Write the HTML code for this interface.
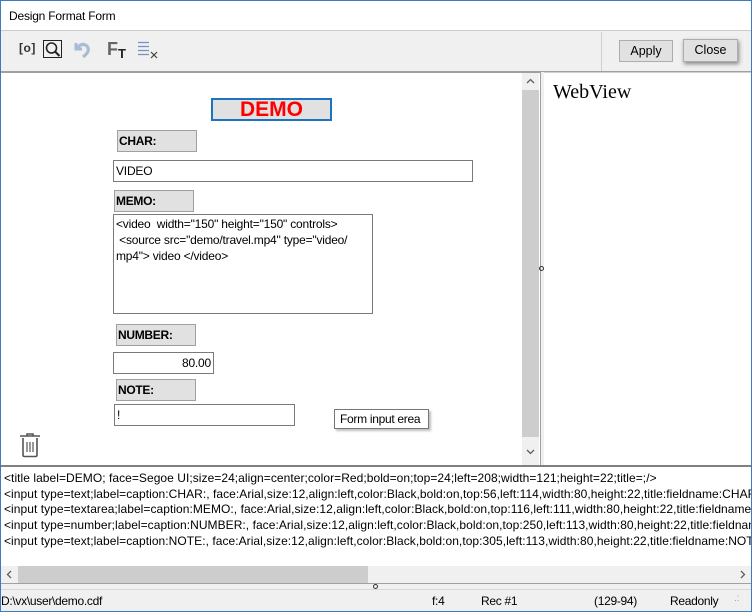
<!DOCTYPE html>
<html><head><meta charset="utf-8"><style>
*{margin:0;padding:0;box-sizing:border-box}
body{width:752px;height:612px;position:relative;overflow:hidden;background:#f0f0f0;font-family:"Liberation Sans",sans-serif;font-size:12px;color:#000}
.a{position:absolute}
.lbl{position:absolute;background:#e1e1e1;border:1px solid #a0a0a0;font-weight:bold;font-size:12px;padding:3px 0 0 1px;height:22px;letter-spacing:-0.3px}
.inp{position:absolute;background:#fff;border:1px solid #7a7a7a;font-size:12px;padding:3px 2px;letter-spacing:-0.2px}
.code{position:absolute;left:3px;font-size:12px;letter-spacing:0.05px;white-space:nowrap;color:#000}
</style></head><body>
<div class="a" style="left:0;top:0;width:752px;height:612px;border:1px solid #3b7bbf"></div>
<div class="a" style="left:1px;top:1px;width:750px;height:30px;background:#fff;border-bottom:1px solid #ccc"></div>
<div class="a" style="left:9px;top:9px;font-size:12px;letter-spacing:-0.2px">Design Format Form</div>
<div class="a" style="left:1px;top:32px;width:750px;height:40px;background:#f0f0f0;border-bottom:1px solid #a0a0a0"></div>
<div class="a" style="left:601px;top:32px;width:1px;height:39px;background:#d0d0d0"></div>
<div class="a" style="left:19px;top:41px;font-size:12px;font-weight:bold;color:#333;letter-spacing:0.5px">[o]</div>
<svg class="a" style="left:43px;top:40px" width="20" height="19"><rect x="0.5" y="0.5" width="18" height="17" fill="none" stroke="#222"/><circle cx="8.5" cy="8" r="5" fill="none" stroke="#222" stroke-width="1.6"/><line x1="12" y1="11.5" x2="16.5" y2="16" stroke="#222" stroke-width="2"/></svg>
<svg class="a" style="left:73px;top:40px" width="20" height="20"><path d="M3 3 L3 9 L9 9" fill="none" stroke="#a9bcd6" stroke-width="3"/><path d="M4 8 Q9 2 14 6 Q18 11 10 17" fill="none" stroke="#a9bcd6" stroke-width="3.2"/></svg>
<div class="a" style="left:107px;top:39px;font-size:18px;font-weight:bold;color:#666">F</div>
<div class="a" style="left:118px;top:46px;font-size:13px;font-weight:bold;color:#222">T</div>
<svg class="a" style="left:137px;top:41px" width="22" height="19"><g stroke="#7d8fc4" stroke-width="1.3"><line x1="1" y1="1.5" x2="12" y2="1.5"/><line x1="1" y1="5.5" x2="12" y2="5.5"/><line x1="1" y1="9.5" x2="12" y2="9.5"/><line x1="1" y1="13.5" x2="12" y2="13.5"/></g><g stroke="#444" stroke-width="1.2"><line x1="14" y1="11" x2="20" y2="17"/><line x1="20" y1="11" x2="14" y2="17"/></g></svg>
<div class="a" style="left:619px;top:40px;width:54px;height:22px;background:#e1e1e1;border:1px solid #adadad;text-align:center;line-height:20px;font-size:12.5px">Apply</div>
<div class="a" style="left:683px;top:39px;width:55px;height:23px;background:#e1e1e1;border:1px solid #adadad;text-align:center;line-height:21px;font-size:12.5px;box-shadow:1px 2px 4px rgba(0,0,0,.45)">Close</div>
<div class="a" style="left:1px;top:72px;width:540px;height:393px;background:#fff;border-right:1px solid #a0a0a0;border-top:1px solid #a0a0a0"></div>
<div class="a" style="left:522px;top:73px;width:17px;height:392px;background:#f0f0f0"></div>
<div class="a" style="left:522px;top:90px;width:17px;height:347px;background:#cdcdcd"></div>
<svg class="a" style="left:526px;top:78px" width="9" height="6"><path d="M1 5 L4.5 1.5 L8 5" fill="none" stroke="#606060" stroke-width="1.3"/></svg>
<svg class="a" style="left:526px;top:449px" width="9" height="6"><path d="M1 1 L4.5 4.5 L8 1" fill="none" stroke="#606060" stroke-width="1.3"/></svg>
<div class="a" style="left:211px;top:98px;width:121px;height:23px;background:#e1e1e1;border:2px solid #1e73be;color:#f00;font-weight:bold;font-size:21px;text-align:center;line-height:19px">DEMO</div>
<div class="lbl" style="left:117px;top:130px;width:80px">CHAR:</div>
<div class="inp" style="left:113px;top:160px;width:360px;height:22px">VIDEO</div>
<div class="lbl" style="left:114px;top:190px;width:80px">MEMO:</div>
<div class="inp" style="left:113px;top:214px;width:260px;height:100px;line-height:16px;padding:1px 2px">&lt;video&nbsp; width="150" height="150" controls&gt;<br>&nbsp;&lt;source src="demo/travel.mp4" type="video/<br>mp4"&gt; video &lt;/video&gt;</div>
<div class="lbl" style="left:116px;top:324px;width:80px">NUMBER:</div>
<div class="inp" style="left:113px;top:352px;width:101px;height:22px;text-align:right">80.00</div>
<div class="lbl" style="left:116px;top:379px;width:80px">NOTE:</div>
<div class="inp" style="left:114px;top:404px;width:181px;height:22px">!</div>
<div class="a" style="left:334px;top:409px;width:95px;height:20px;background:#fff;border:1px solid #767676;font-size:12px;padding:2px 0 0 5px;letter-spacing:-0.3px;box-shadow:2px 2px 2px rgba(0,0,0,.25)">Form input erea</div>
<svg class="a" style="left:19px;top:433px" width="24" height="25"><path d="M1 3 H21 M8 3 V1 H14 V3" fill="none" stroke="#555" stroke-width="1.6"/><path d="M4 5 V22 Q4 23.5 5.5 23.5 H16.5 Q18 23.5 18 22 V5" fill="none" stroke="#555" stroke-width="1.6"/><g stroke="#555" stroke-width="1.2"><line x1="8" y1="9" x2="8" y2="19"/><line x1="11" y1="9" x2="11" y2="19"/><line x1="14" y1="9" x2="14" y2="19"/></g></svg>
<div class="a" style="left:539px;top:266px;width:5px;height:5px;border:1px solid #333;border-radius:50%"></div>
<div class="a" style="left:544px;top:72px;width:207px;height:393px;background:#fff;border-top:1px solid #d0d0d0"></div>
<div class="a" style="left:553px;top:81px;font-family:'Liberation Serif',serif;font-size:20px">WebView</div>
<div class="a" style="left:1px;top:465px;width:750px;height:119px;background:#fff;border-top:2px solid #808080;border-bottom:1px solid #a0a0a0;overflow:hidden">
<div class="code" style="top:4px">&lt;title label=DEMO; face=Segoe UI;size=24;align=center;color=Red;bold=on;top=24;left=208;width=121;height=22;title=;/&gt;</div>
<div class="code" style="top:20px">&lt;input type=text;label=caption:CHAR:, face:Arial,size:12,align:left,color:Black,bold:on,top:56,left:114,width:80,height:22,title:fieldname:CHAR; face</div>
<div class="code" style="top:35px">&lt;input type=textarea;label=caption:MEMO:, face:Arial,size:12,align:left,color:Black,bold:on,top:116,left:111,width:80,height:22,title:fieldname:MEMO</div>
<div class="code" style="top:51px">&lt;input type=number;label=caption:NUMBER:, face:Arial,size:12,align:left,color:Black,bold:on,top:250,left:113,width:80,height:22,title:fieldname:NUMBER</div>
<div class="code" style="top:67px">&lt;input type=text;label=caption:NOTE:, face:Arial,size:12,align:left,color:Black,bold:on,top:305,left:113,width:80,height:22,title:fieldname:NOTE; face</div>
<div class="a" style="left:0;top:99px;width:750px;height:17px;background:#f0f0f0"></div>
<div class="a" style="left:17px;top:99px;width:350px;height:17px;background:#cdcdcd"></div>
<svg class="a" style="left:5px;top:103px" width="6" height="9"><path d="M5 1 L1.5 4.5 L5 8" fill="none" stroke="#606060" stroke-width="1.3"/></svg>
<svg class="a" style="left:739px;top:103px" width="6" height="9"><path d="M1 1 L4.5 4.5 L1 8" fill="none" stroke="#606060" stroke-width="1.3"/></svg>
</div>
<div class="a" style="left:373px;top:584px;width:5px;height:5px;border:1px solid #333;border-radius:50%"></div>
<div class="a" style="left:1px;top:589px;width:750px;height:1px;background:#d8d8d8"></div>
<div class="a" style="left:1px;top:594px;font-size:12px;letter-spacing:-0.3px">D:\vx\user\demo.cdf</div>
<div class="a" style="left:432px;top:594px;font-size:12px;letter-spacing:-0.3px">f:4</div>
<div class="a" style="left:481px;top:594px;font-size:12px;letter-spacing:-0.3px">Rec #1</div>
<div class="a" style="left:594px;top:594px;font-size:12px;letter-spacing:-0.3px">(129-94)</div>
<div class="a" style="left:670px;top:594px;font-size:12px;letter-spacing:-0.3px">Readonly</div>
<div class="a" style="left:734px;top:593px;font-size:10px;color:#999">.:</div>
</body></html>
